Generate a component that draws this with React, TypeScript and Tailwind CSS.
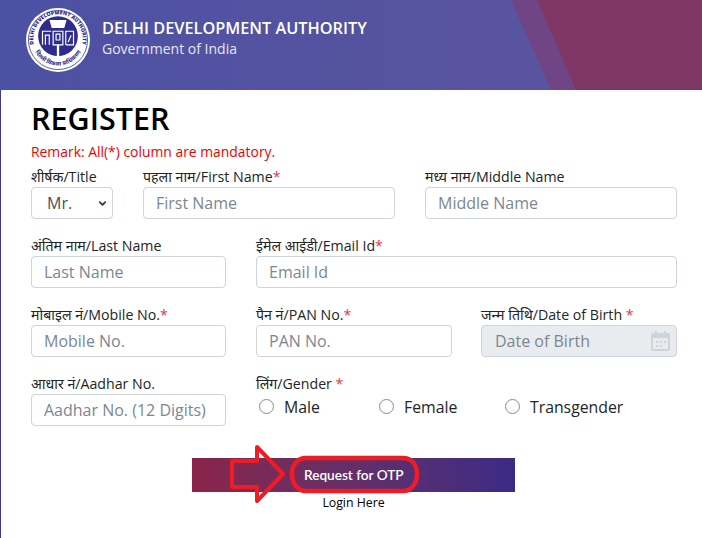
import { ChevronDown } from "lucide-react";

const font = "font-['Open_Sans','Noto_Sans','Noto_Sans_Devanagari',sans-serif]";
const input =
  "h-8 w-full rounded-[4px] border border-[#ced4da] bg-white px-3 text-base text-[#495057] placeholder:text-[#7b8793] outline-none";
const labelCls = "block h-[21px] text-[14.2px] leading-[21px] text-[#212529] whitespace-nowrap";

const Logo = () => (
  <svg width="64" height="64" viewBox="0 0 66 66" className="shrink-0">
    <defs>
      <path id="top" d="M8 37 A25.5 25.5 0 1 1 58 37" />
      <path id="bottom" d="M7 38 A26.5 26.5 0 0 0 59 38" />
    </defs>
    <circle cx="33" cy="33" r="33" fill="#fff" />
    <circle cx="33" cy="33" r="30.5" fill="none" stroke="#34338f" strokeWidth="0.8" />
    <circle cx="33" cy="29" r="20.5" fill="#2e2d8d" />
    <text fontSize="5.4" fontWeight="800" fill="#2e2d8d" fontFamily="Open Sans">
      <textPath href="#top" startOffset="50%" textAnchor="middle">DELHI DEVELOPMENT AUTHORITY</textPath>
    </text>
    <text fontSize="6" fontWeight="700" fill="#2e2d8d" fontFamily="Noto Sans">
      <textPath href="#bottom" startOffset="50%" textAnchor="middle">दिल्ली विकास प्राधिकरण</textPath>
    </text>
    <g fill="none" stroke="#fff" strokeWidth="1.2">
      <path d="M33 52V38" strokeWidth="2.4" />
      <path d="M27 20h12l2-7H25z" fill="#fff" />
      <path d="M17 38V24h9M20 38V28h4v10" />
      <path d="M28 24h10v14H28z" />
      <path d="M31 27h4v6h-4z" />
      <path d="M41 38V24h8v14h-8M43.5 35l3-7" />
    </g>
  </svg>
);

const Field = ({ label, star, placeholder, className }: { label: string; star?: string; placeholder: string; className: string }) => (
  <div className={className}>
    <label className={labelCls}>
      {label}
      {star && <span className="text-[#e8354a]">{star}</span>}
    </label>
    <input className={input} placeholder={placeholder} />
  </div>
);

const Radio = ({ label, className }: { label: string; className: string }) => (
  <label className={`flex items-center ${className}`}>
    <span className="mb-[2px] h-[15px] w-[15px] rounded-full border border-[#8a8a8a] bg-white" />
    <span className="ml-[10px] text-[15.8px] leading-6 text-[#212529]">{label}</span>
  </label>
);

export default function App() {
  return (
    <div className={`h-[538px] w-[702px] overflow-hidden bg-white ${font}`}>
      <header className="relative flex h-[90px] items-center bg-gradient-to-r from-[#4c51a3] to-[#5d559e] pl-[26px] pb-[10px]">
        <svg className="absolute inset-0" width="702" height="90" viewBox="0 0 702 90">
          <polygon points="511,0 702,0 702,90 551,90" fill="#6f4585" />
          <polygon points="537,0 702,0 702,90 576,90" fill="#7f3765" />
        </svg>
        <div className="relative flex items-center gap-3">
          <Logo />
          <div className="pb-[6px] text-white">
            <div className="text-[16.3px] font-semibold leading-[22px] whitespace-nowrap">DELHI DEVELOPMENT AUTHORITY</div>
            <div className="text-[14px] leading-[19px] text-[#e6e6f2]">Government of India</div>
          </div>
        </div>
      </header>

      <main className="h-[448px] border-l border-[#3c3a8f] pl-[30px] pr-[25px] pt-[9px]">
        <h1 className="text-[30.5px] font-semibold leading-[38px] text-black">REGISTER</h1>
        <p className="mt-[5px] text-[13.9px] leading-[19px] text-[#f00000]">Remark: All(*) column are mandatory.</p>

        <div className="mt-[5px] flex gap-[30px]">
          <div className="w-[82px] shrink-0">
            <label className={labelCls}>शीर्षक/Title</label>
            <div className="relative flex h-8 items-center rounded-[4px] border border-[#ced4da] pl-[15px] text-base text-[#495057]">
              Mr.
              <ChevronDown className="absolute right-[4px] top-[10px] h-[11px] w-[11px] text-[#343a40]" strokeWidth={4} />
            </div>
          </div>
          <Field className="w-[252px]" label="पहला नाम/First Name" star="*" placeholder="First Name" />
          <Field className="w-[252px]" label="मध्य नाम/Middle Name" placeholder="Middle Name" />
        </div>

        <div className="mt-[16px] flex gap-[30px]">
          <Field className="w-[195px] shrink-0" label="अंतिम नाम/Last Name" placeholder="Last Name" />
          <Field className="w-[421px]" label="ईमेल आईडी/Email Id" star="*" placeholder="Email Id" />
        </div>

        <div className="mt-[16px] flex">
          <Field className="w-[195px] shrink-0" label="मोबाइल नं/Mobile No." star="*" placeholder="Mobile No." />
          <Field className="ml-[30px] w-[196px]" label="पैन नं/PAN No." star="*" placeholder="PAN No." />
          <div className="ml-[29px] w-[196px]">
            <label className={labelCls}>
              जन्म तिथि/Date of Birth <span className="text-[#e8354a]">*</span>
            </label>
            <div className="flex h-8 items-center justify-between rounded-[4px] border border-[#ced4da] bg-[#e9ecef] pl-[13px] pr-[6px] text-base text-[#7b8793]">
              Date of Birth
              <svg width="19" height="20" viewBox="0 0 19 20" fill="#ced4da">
                <path d="M4 0h2v2h7V0h2v2h2a2 2 0 0 1 2 2v14a2 2 0 0 1-2 2H2a2 2 0 0 1-2-2V4a2 2 0 0 1 2-2h2z" />
                <path d="M2 7h15v11H2z" fill="#e9ecef" />
                <path d="M5 10h2v2H5zM9 10h2v2H9zM13 10h2v2h-2zM5 14h2v2H5zM9 14h2v2H9z" />
              </svg>
            </div>
          </div>
        </div>

        <div className="mt-[16px] flex gap-[30px]">
          <Field className="w-[195px] shrink-0" label="आधार नं/Aadhar No." placeholder="Aadhar No. (12 Digits)" />
          <div className="w-[421px]">
            <label className={labelCls}>
              लिंग/Gender <span className="text-[#e8354a]">*</span>
            </label>
            <div className="mt-[1px] flex pl-[3px]">
              <Radio className="w-[120px]" label="Male" />
              <Radio className="w-[126px]" label="Female" />
              <Radio className="w-[130px]" label="Transgender" />
            </div>
          </div>
        </div>

        <div className="relative mt-[32px] ml-[161px] flex h-[34px] w-[323px] items-center bg-gradient-to-r from-[#8a2349] to-[#3b2a85] pl-[112px]">
          <span className="font-['Lato',sans-serif] text-[13.6px] font-semibold text-white">Request for OTP</span>
          <svg className="absolute left-[32px] top-[-14px]" width="200" height="62" viewBox="0 0 200 62" fill="none" stroke="#ee1c25" strokeLinejoin="round">
            <path d="M8 17h25V3l26 27-26 27V43H8z" strokeWidth="4" />
            <path d="M82 14h97c8 0 14 6 14 16s-6 17-14 17H82c-8 0-14-7-14-17s6-16 14-16z" strokeWidth="4.5" />
          </svg>
        </div>
        <p className="mt-[2px] ml-[161px] w-[323px] text-center text-[12.3px] font-medium leading-[18px] text-black">Login Here</p>
      </main>
    </div>
  );
}
